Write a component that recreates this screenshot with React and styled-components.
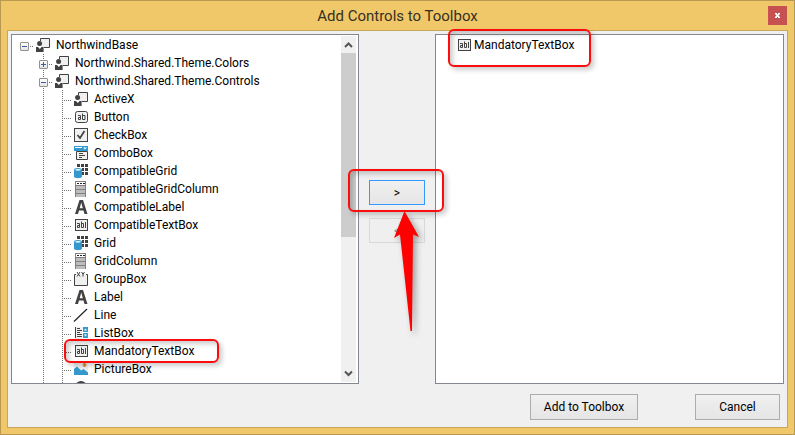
import React from "react";
import styled, { createGlobalStyle, css } from "styled-components";

const GlobalStyle = createGlobalStyle`
  *, *::before, *::after { box-sizing: border-box; }
  html, body, #root { height: 100%; margin: 0; }
  body { font-family: Roboto, "Open Sans", sans-serif; font-size: 12px; line-height: 18px; color: #000; }
  button { font: inherit; color: inherit; padding: 0; margin: 0; }
  ul { list-style: none; margin: 0; padding: 0; }
`;

const INK = "#424242";
const BLUE = "#3399cc";
const PANE = "#f0f0f0";

const Window = styled.main`
  display: flex;
  flex-direction: column;
  min-height: 100%;
  padding: 0 6px 6px;
  border: 1px solid #b8994f;
  background: #f0c869;
`;

const TitleBar = styled.header`
  display: grid;
  grid-template-columns: 1fr auto 1fr;
  align-items: center;
  height: 29px;
`;

const Title = styled.h1`
  grid-column: 2;
  margin: 0;
  font-size: 15px;
  font-weight: 400;
  line-height: 20px;
  color: #35301f;
`;

const CloseButton = styled.button`
  display: flex;
  align-items: center;
  justify-content: center;
  justify-self: end;
  width: 19px;
  height: 19px;
  margin-right: 1px;
  border: 0;
  background: #c75050;
`;

const Client = styled.section`
  display: flex;
  flex: 1;
  flex-direction: column;
  padding: 3px;
  border: 1px solid #c8a758;
  background: #f0f0f0;
`;

const Columns = styled.div`
  display: grid;
  grid-template-columns: minmax(0, 348fr) 76px minmax(0, 349fr);
  flex: 1;
`;

const Panel = styled.div`
  display: flex;
  min-width: 0;
  border: 1px solid #828790;
  background: #fff;
`;

const TreeView = styled.div`
  flex: 1;
  height: 348px;
  padding: 1px 0 0 3px;
  overflow: hidden;
`;

const TreeRow = styled.li`
  display: flex;
  align-items: center;
  height: 18px;
  white-space: nowrap;
`;

const Guide = styled.span`
  position: relative;
  display: flex;
  flex: none;
  align-items: center;
  justify-content: center;
  width: 19px;
  height: 18px;
  padding-top: 2px;

  ${(p) => p.$line && css`
    &::before {
      content: "";
      position: absolute;
      left: 9px;
      top: 0;
      width: 1px;
      height: 18px;
      background: repeating-linear-gradient(#707070 0 1px, transparent 1px 2px);
    }
  `}
  ${(p) => p.$branch && css`
    &::after {
      content: "";
      position: absolute;
      left: 11px;
      right: 0;
      top: 10px;
      height: 1px;
      background: repeating-linear-gradient(90deg, #707070 0 1px, transparent 1px 2px);
    }
  `}
`;

const Expander = styled.button`
  position: relative;
  z-index: 1;
  display: flex;
  width: 9px;
  height: 9px;
  border: 1px solid #919191;
  border-radius: 1px;
  background: linear-gradient(#fff, #e4e4e4);
`;

const ItemLabel = styled.span`
  position: relative;
  display: flex;
  align-items: center;
  gap: ${(p) => p.$gap}px;
  margin-left: 1px;
`;

const ScrollBar = styled.div`
  display: flex;
  flex-direction: column;
  width: 15px;
  margin: 1px 2px 1px 0;
  background: #f0f0f0;
`;

const ScrollButton = styled.button`
  display: flex;
  align-items: center;
  justify-content: center;
  height: 17px;
  border: 0;
  background: #f0f0f0;
`;

const ScrollTrack = styled.div`
  flex: 1;
`;

const ScrollThumb = styled.div`
  height: 59%;
  background: #cdcdcd;
`;

const Transfer = styled.div`
  display: flex;
  flex-direction: column;
  gap: 13px;
  padding: 146px 10px 0;
`;

const ButtonHolder = styled.div`
  position: relative;
  display: flex;
`;

const PushButton = styled.button`
  width: ${(p) => p.$width || "100%"};
  height: ${(p) => p.$height || 25}px;
  border: 1px solid ${(p) => (p.$focused ? "#3399ff" : "#acacac")};
  background: linear-gradient(#f0f0f0, #e5e5e5);

  &:disabled {
    border-color: #d9d9d9;
    background: #efefef;
    color: #838383;
  }
`;

const SelectedList = styled.ul`
  flex: 1;
  padding: 1px 0 0 19px;
`;

const SelectedRow = styled.li`
  display: flex;
  height: 18px;
  align-items: center;
`;

const Footer = styled.footer`
  display: flex;
  justify-content: flex-end;
  gap: 57px;
  padding: 10px 4px 4px;
`;

const Highlight = styled.span`
  position: absolute;
  z-index: 2;
  top: ${(p) => p.$top}px;
  right: ${(p) => p.$right}px;
  bottom: ${(p) => p.$bottom}px;
  left: ${(p) => p.$left}px;
  border: 2px solid #fb0d0d;
  border-radius: 6px;
  box-shadow: 3px 3px 5px rgba(0, 0, 0, 0.2), inset 3px 3px 5px rgba(0, 0, 0, 0.2);
  pointer-events: none;
`;

const Pointer = styled.svg`
  position: absolute;
  z-index: 3;
  top: 30px;
  left: 22px;
  overflow: visible;
  filter: drop-shadow(3px 3px 3px rgba(0, 0, 0, 0.35));
  pointer-events: none;
`;

const Glyph = styled.svg`
  flex: none;
  width: 16px;
  height: 16px;
`;

const shapes = {
  control: (
    <>
      <path d="M6 1h9v10H6z" fill={PANE} />
      <path d="M5.500 4V1.500h9v9H9" fill="none" stroke={INK} />
      <circle cx="4.600" cy="6.600" r="2.500" fill={INK} />
      <path d="M1 10h2l1.800 2L6.600 10h2v5H1z" fill={INK} />
    </>
  ),
  button: (
    <>
      <rect x="2.500" y="2.500" width="12" height="11" rx="2" fill={PANE} stroke={INK} />
      <path d="M5 6.500h2.500v4h-2v-2h2M9.500 4.500v6h2.500v-4H9.500" fill="none" stroke={INK} />
    </>
  ),
  check: (
    <>
      <rect x="1.500" y="1.500" width="13" height="13" fill={PANE} stroke={INK} />
      <path d="M4.500 8l2.500 3 4.500-7" fill="none" stroke={INK} strokeWidth="1.700" />
    </>
  ),
  combo: (
    <>
      <path d="M1 1h14v5H1z" fill={BLUE} />
      <path d="M2 2h7v1H2zM10 2.500h4l-2 2z" fill="#fff" />
      <path d="M3.500 6.500h11v8h-11z" fill={PANE} stroke={INK} />
      <path d="M6 8.500h4M6 10.500h6M6 12.500h3" stroke={INK} />
    </>
  ),
  grid: (
    <>
      <path d="M4 1h3v3H4zM8 1h3v3H8zM12 1h3v3h-3zM9 5h2v3H9zM12 5h3v3h-3zM9 9h2v3H9zM12 9h3v3h-3z" fill={INK} />
      <path d="M1 6.500C1 4.500 9 4.500 9 6.500v7.300c0 1.800-8 1.800-8 0z" fill={BLUE} />
      <ellipse cx="5" cy="6.700" rx="2.800" ry="1" fill="#d8ecf7" />
    </>
  ),
  column: (
    <>
      <path d="M2 0h11v16H2z" fill="#808080" />
      <path d="M3 1h9v3H3z" fill="#fff" />
      <path d="M4 2.500h8" stroke="#222" strokeDasharray="2 1" />
      <path d="M3 5h9v3H3zM3 9h9v3H3zM3 13h9v3H3z" fill="#bdbdbd" />
    </>
  ),
  letter: (
    <path
      d="M2 15L6.500 1h3.500L14.500 15H11.500L10.500 11.500H6L5 15zM6.700 9.300H9.800L8.250 3.500z"
      fill={INK}
      fillRule="evenodd"
    />
  ),
  text: (
    <>
      <rect x="2.500" y="2.500" width="12" height="11" fill={PANE} stroke={INK} />
      <path d="M4 6.500h2.500v4h-2v-2h2M8.500 4.500v6h2v-4h-2M12.500 5v6" fill="none" stroke={INK} />
    </>
  ),
  group: (
    <>
      <path d="M1 3h14v12H1z" fill={PANE} />
      <path d="M3 3.500H1.500v11h13v-11H13" fill="none" stroke={INK} />
      <path d="M4 1l3 4.500M7 1L4 5.500M8.500 1L10 3.300V5.500M11.500 1L10 3.300" fill="none" stroke={INK} />
    </>
  ),
  line: <path d="M1 14.500L14 2" stroke="#222" strokeWidth="1.200" />,
  list: (
    <>
      <path d="M1.500 2h8v12h-8z" fill={PANE} />
      <path d="M4 3.500h3M4 5.500h5M4 7.500h3M4 9.500h5M4 11.500h5M2.500 2v11" stroke={INK} />
      <path d="M10 2h5v5h-5zM10 8h5v5h-5z" fill={BLUE} />
      <path d="M11 5.500l1.500-2 1.500 2zM11 9.500l1.500 2 1.500-2z" fill="#fff" />
    </>
  ),
  picture: (
    <>
      <path d="M1 1h14v13H1z" fill={PANE} />
      <path d="M1 14V8l3-2.500 4 4L10.500 8 15 11.500V14z" fill={BLUE} />
      <path d="M11.500 2v4M9.500 4h4M10 2.600l3 2.800M13 2.600l-3 2.800" stroke="#d9822b" />
    </>
  ),
  radio: <circle cx="8" cy="8" r="5" fill={PANE} stroke={INK} strokeWidth="2" />,
};

const Icon = ({ name }) => (
  <Glyph viewBox="0 0 16 16" aria-hidden="true">
    {shapes[name]}
  </Glyph>
);

const rows = [
  { level: 1, icon: "control", label: "NorthwindBase", open: true },
  { level: 2, icon: "control", label: "Northwind.Shared.Theme.Colors", open: false },
  { level: 2, icon: "control", label: "Northwind.Shared.Theme.Controls", open: true },
  { level: 3, icon: "control", label: "ActiveX" },
  { level: 3, icon: "button", label: "Button" },
  { level: 3, icon: "check", label: "CheckBox" },
  { level: 3, icon: "combo", label: "ComboBox" },
  { level: 3, icon: "grid", label: "CompatibleGrid" },
  { level: 3, icon: "column", label: "CompatibleGridColumn" },
  { level: 3, icon: "letter", label: "CompatibleLabel" },
  { level: 3, icon: "text", label: "CompatibleTextBox" },
  { level: 3, icon: "grid", label: "Grid" },
  { level: 3, icon: "column", label: "GridColumn" },
  { level: 3, icon: "group", label: "GroupBox" },
  { level: 3, icon: "letter", label: "Label" },
  { level: 3, icon: "line", label: "Line" },
  { level: 3, icon: "list", label: "ListBox" },
  { level: 3, icon: "text", label: "MandatoryTextBox", marked: true },
  { level: 3, icon: "picture", label: "PictureBox" },
  { level: 3, icon: "radio", label: "" },
];

const TreeItem = ({ level, icon, label, open, marked }) => (
  <TreeRow role="treeitem" aria-level={level} aria-expanded={open}>
    {Array.from({ length: level }, (_, i) => (
      <Guide key={i} $line={i > 0} $branch={i === level - 1}>
        {i === level - 1 && open !== undefined && (
          <Expander aria-label={open ? "Collapse" : "Expand"}>
            <svg width="7" height="7" viewBox="0 0 7 7" aria-hidden="true">
              <path d={open ? "M1 3.5h5" : "M1 3.5h5M3.5 1v5"} stroke="#3b5caa" />
            </svg>
          </Expander>
        )}
      </Guide>
    ))}
    <ItemLabel $gap={5}>
      <Icon name={icon} />
      {label}
      {marked && <Highlight $top={-3} $right={-25} $bottom={-3} $left={-9} />}
    </ItemLabel>
  </TreeRow>
);

const Chevron = ({ down }) => (
  <svg width="9" height="8" viewBox="0 0 9 8" aria-hidden="true">
    <path d={down ? "M1 1.500l3.500 3.500L8 1.500" : "M1 6l3.500-3.500L8 6"} fill="none" stroke="#555" strokeWidth="2" />
  </svg>
);

export default function App() {
  return (
    <>
      <GlobalStyle />
      <Window>
        <TitleBar>
          <Title>Add Controls to Toolbox</Title>
          <CloseButton aria-label="Close">
            <svg width="7" height="7" viewBox="0 0 7 7" aria-hidden="true">
              <path d="M1.500 1.500l4 4M5.500 1.500l-4 4" stroke="#fff" strokeWidth="1.500" />
              <path d="M1 1.500h2M4 1.500h2M1 5.500h2M4 5.500h2" stroke="#fff" />
            </svg>
          </CloseButton>
        </TitleBar>
        <Client>
          <Columns>
            <Panel>
              <TreeView>
                <ul role="tree" aria-label="Available controls">
                  {rows.map((row, i) => (
                    <TreeItem key={i} {...row} />
                  ))}
                </ul>
              </TreeView>
              <ScrollBar>
                <ScrollButton aria-label="Scroll up"><Chevron /></ScrollButton>
                <ScrollTrack><ScrollThumb /></ScrollTrack>
                <ScrollButton aria-label="Scroll down"><Chevron down /></ScrollButton>
              </ScrollBar>
            </Panel>
            <Transfer>
              <ButtonHolder>
                <PushButton $focused>&gt;</PushButton>
                <Highlight $top={-11} $right={-19} $bottom={-7} $left={-21} />
                <Pointer width="30" height="122" viewBox="0 0 30 122" aria-hidden="true">
                  <path d="M13.500 1L28 27l-6-2.500L21 121h-1.500L9 24.500 3 28z" fill="#f00" />
                </Pointer>
              </ButtonHolder>
              <PushButton disabled>&lt;</PushButton>
            </Transfer>
            <Panel>
              <SelectedList aria-label="Selected controls">
                <SelectedRow>
                  <ItemLabel $gap={2}>
                    <Icon name="text" />
                    MandatoryTextBox
                    <Highlight $top={-7} $right={-17} $bottom={-13} $left={-8} />
                  </ItemLabel>
                </SelectedRow>
              </SelectedList>
            </Panel>
          </Columns>
          <Footer>
            <PushButton $width="108px" $height={26}>Add to Toolbox</PushButton>
            <PushButton $width="85px" $height={26}>Cancel</PushButton>
          </Footer>
        </Client>
      </Window>
    </>
  );
}
